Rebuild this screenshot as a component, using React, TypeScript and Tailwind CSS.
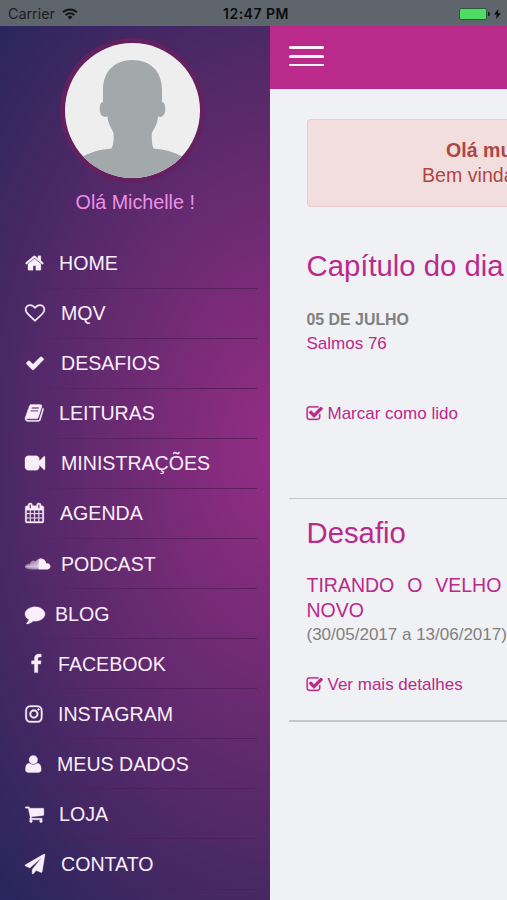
import React from "react";
import { FaSoundcloud } from "react-icons/fa";

const PATHS = {
  home: "M1472 992v480q0 26-19 45t-45 19h-384v-384h-256v384h-384q-26 0-45-19t-19-45v-480q0-1 .5-3t.5-3l575-474 575 474q1 2 1 6zm223-69l-62 74q-8 9-21 11h-3q-13 0-21-7l-692-577-692 577q-12 8-24 7-13-2-21-11l-62-74q-8-10-7-23.5t11-21.5l719-599q32-26 76-26t76 26l244 204v-195q0-14 9-23t23-9h192q14 0 23 9t9 23v408l219 182q10 8 11 21.5t-7 23.5z",
  heart: "M1664 596q0-81-21.5-143t-55-98.5-81.5-59.5-94-31-98-8-112 25.5-110.5 64-86.5 72-60 61.5q-18 22-49 22t-49-22q-24-28-60-61.5t-86.5-72-110.5-64-112-25.5-98 8-94 31-81.5 59.5-55 98.5-21.5 143q0 168 187 355l581 560 580-559q188-188 188-356zm128 0q0 221-229 450l-623 600q-18 18-44 18t-44-18l-624-602q-10-8-27.5-26t-55.5-65.5-68-97.5-53.5-121-23.5-138q0-220 127-344t351-124q62 0 126.5 21.5t120 58 95.5 68.5 76 68q36-36 76-68t95.5-68.5 120-58 126.5-21.5q224 0 351 124t127 344z",
  check: "M1671 566q0 40-28 68l-724 724-136 136q-28 28-68 28t-68-28l-136-136-362-362q-28-28-28-68t28-68l136-136q28-28 68-28t68 28l294 295 656-657q28-28 68-28t68 28l136 136q28 28 28 68z",
  book: "M1703 478q40 57 18 129l-275 906q-19 64-76.5 107.5t-122.5 43.5h-923q-77 0-148.5-53.5t-99.5-131.5q-24-67-2-127 0-4 3-27t4-37q1-8-3-21.5t-3-19.5q2-11 8-21t16.5-23.5 16.5-23.5q23-38 45-91.5t30-91.5q3-10 .5-30t-.5-28q3-11 17-28t17-23q21-36 42-92t25-90q1-9-2.5-32t.5-28q4-13 22-30.5t22-22.5q19-26 42.5-84.5t27.5-96.5q1-8-3-25.5t-2-26.5q2-8 9-18t18-23 17-21q8-12 16.5-30.5t15-35 16-36 19.5-32 26.5-23.5 36-11.5 47.5 5.5l-1 3q38-9 51-9h761q74 0 114 56t18 130l-274 906q-36 119-71.5 153.5t-128.5 34.5h-869q-27 0-38 15-11 16-1 43 24 70 144 70h923q29 0 56-15.5t35-41.5l300-987q7-22 5-57 38 15 59 43zm-1064 2q-4 13 2 22.5t20 9.5h608q13 0 25.5-9.5t16.5-22.5l21-64q4-13-2-22.5t-20-9.5h-608q-13 0-25.5 9.5t-16.5 22.5zm-83 256q-4 13 2 22.5t20 9.5h608q13 0 25.5-9.5t16.5-22.5l21-64q4-13-2-22.5t-20-9.5h-608q-13 0-25.5 9.5t-16.5 22.5z",
  video: "M1792 352v1088q0 42-39 59-13 5-25 5-27 0-45-19l-403-403v166q0 119-84.5 203.5t-203.5 84.5h-704q-119 0-203.5-84.5t-84.5-203.5v-704q0-119 84.5-203.5t203.5-84.5h704q119 0 203.5 84.5t84.5 203.5v165l403-402q18-19 45-19 12 0 25 5 39 17 39 59z",
  calendar: "M192 1664h288v-288h-288v288zm352 0h320v-288h-320v288zm-352-352h288v-320h-288v320zm352 0h320v-320h-320v320zm-352-384h288v-288h-288v288zm736 736h320v-288h-320v288zm-384-736h320v-288h-320v288zm768 736h288v-288h-288v288zm-384-352h320v-320h-320v320zm-352-864v-288q0-13-9.5-22.5t-22.5-9.5h-64q-13 0-22.5 9.5t-9.5 22.5v288q0 13 9.5 22.5t22.5 9.5h64q13 0 22.5-9.5t9.5-22.5zm736 864h288v-320h-288v320zm-384-384h320v-288h-320v288zm384 0h288v-288h-288v288zm32-480v-288q0-13-9.5-22.5t-22.5-9.5h-64q-13 0-22.5 9.5t-9.5 22.5v288q0 13 9.5 22.5t22.5 9.5h64q13 0 22.5-9.5t9.5-22.5zm384-64v1280q0 52-38 90t-90 38h-1408q-52 0-90-38t-38-90v-1280q0-52 38-90t90-38h128v-96q0-66 47-113t113-47h64q66 0 113 47t47 113v96h384v-96q0-66 47-113t113-47h64q66 0 113 47t47 113v96h128q52 0 90 38t38 90z",
  comment: "M1792 896q0 174-120 321.5t-326 233-450 85.5q-70 0-145-8-198 175-460 242-49 14-114 22-17 2-30.5-9t-17.5-29v-1q-3-4-.5-12t2-10 4.5-9.5l6-9 7-8.5 8-9q7-8 31-34.5t34.5-38 31-39.5 32.5-51 27-59 26-76q-157-89-247.5-220t-90.5-281q0-130 71-248.5t191-204.5 286-136.5 348-50.5q244 0 450 85.5t326 233 120 321.5z",
  facebook: "M1343 12v264h-157q-86 0-116 36t-30 108v189h293l-39 296h-254v759h-306v-759h-255v-296h255v-218q0-186 104-288.5t277-102.5q147 0 228 12z",
  instagram: "M1152 896q0-106-75-181t-181-75-181 75-75 181 75 181 181 75 181-75 75-181zm138 0q0 164-115 279t-279 115-279-115-115-279 115-279 279-115 279 115 115 279zm108-410q0 38-27 65t-65 27-65-27-27-65 27-65 65-27 65 27 27 65zm-502-220q-7 0-76.5-.5t-105.5 0-96.5 3-103 10-71.5 18.5q-50 20-88 58t-58 88q-11 29-18.5 71.5t-10 103-3 96.5 0 105.5.5 76.5-.5 76.5 0 105.5 3 96.5 10 103 18.5 71.5q20 50 58 88t88 58q29 11 71.5 18.5t103 10 96.5 3 105.5 0 76.5-.5 76.5.5 105.5 0 96.5-3 103-10 71.5-18.5q50-20 88-58t58-88q11-29 18.5-71.5t10-103 3-96.5 0-105.5-.5-76.5.5-76.5 0-105.5-3-96.5-10-103-18.5-71.5q-20-50-58-88t-88-58q-29-11-71.5-18.5t-103-10-96.5-3-105.5 0-76.5.5zm768 630q0 229-5 317-10 208-124 322t-322 124q-88 5-317 5t-317-5q-208-10-322-124t-124-322q-5-88-5-317t5-317q10-208 124-322t322-124q88-5 317-5t317 5q208 10 322 124t124 322q5 88 5 317z",
  user: "M1600 1405q0 120-73 189.500t-194 69.500h-874q-121 0-194-69.500t-73-189.500q0-53 3.500-103.500t14-109 26.500-108.500 43-97.500 62-81 85.500-53.500 111.500-20q9 0 42 21.500t74.500 48 108 48 133.500 21.500 133.500-21.500 108-48 74.500-48 42-21.500q61 0 111.500 20t85.500 53.500 62 81 43 97.500 26.500 108.500 14 109 3.500 103.500zm-320-893q0 159-112.500 271.500t-271.500 112.500-271.500-112.500-112.500-271.500 112.500-271.500 271.500-112.500 271.500 112.500 112.500 271.500z",
  cart: "M704 1536q0 52-38 90t-90 38-90-38-38-90 38-90 90-38 90 38 38 90zm896 0q0 52-38 90t-90 38-90-38-38-90 38-90 90-38 90 38 38 90zm128-1088v512q0 24-16.5 42.5t-40.5 21.5l-1044 122q13 60 13 70 0 16-24 64h920q26 0 45 19t19 45-19 45-45 19h-1024q-26 0-45-19t-19-45q0-11 8-31.5t16-36 21.5-40 15.5-29.5l-177-823h-204q-26 0-45-19t-19-45 19-45 45-19h256q16 0 28.5 6.5t19.5 15.5 13 24.5 8 26 5.5 29.5 4.5 26h1201q26 0 45 19t19 45z",
  plane: "M1764 11q33 24 27 64l-256 1536q-5 29-32 45-14 8-31 8-11 0-24-5l-453-185-242 295q-18 23-49 23-13 0-22-4-19-7-30.5-23.5t-11.5-36.5v-349l864-1059-1069 925-395-162q-37-14-40-55-2-40 32-59l1664-960q15-9 32-9 20 0 36 11z",
  checkSquare: "M1472 930v318q0 119-84.5 203.5t-203.5 84.5h-832q-119 0-203.5-84.5t-84.5-203.5v-832q0-119 84.5-203.5t203.5-84.5h832q63 0 117 25 15 7 18 23 3 17-9 29l-49 49q-10 10-23 10-3 0-9-2-23-6-45-6h-832q-66 0-113 47t-47 113v832q0 66 47 113t113 47h832q66 0 113-47t47-113v-254q0-13 9-22l64-64q10-10 23-10 6 0 12 3 20 8 20 29zm231-489l-814 814q-24 24-57 24t-57-24l-430-430q-24-24-24-57t24-57l110-110q24-24 57-24t57 24l263 263 647-647q24-24 57-24t57 24l110 110q24 24 24 57t-24 57z",
};

type IconName = keyof typeof PATHS;

function Glyph({ name, shift = 0, className }: { name: IconName; shift?: number; className: string }) {
  return (
    <svg
      className={className}
      viewBox={`${shift} 0 1792 1792`}
      fill="currentColor"
      stroke="currentColor"
      strokeWidth="30"
      overflow="visible"
    >
      <path d={PATHS[name]} />
    </svg>
  );
}

const MENU: { label: string; icon?: IconName; shift?: number; slot: string }[] = [
  { label: "HOME", icon: "home", shift: 50, slot: "w-[34px]" },
  { label: "MQV", icon: "heart", slot: "w-[36px]" },
  { label: "DESAFIOS", icon: "check", slot: "w-[36px]" },
  { label: "LEITURAS", icon: "book", shift: 60, slot: "w-[34px]" },
  { label: "MINISTRAÇÕES", icon: "video", slot: "w-[36px]" },
  { label: "AGENDA", icon: "calendar", shift: 40, slot: "w-[35px]" },
  { label: "PODCAST", slot: "w-[36px]" },
  { label: "BLOG", icon: "comment", slot: "w-[30px]" },
  { label: "FACEBOOK", icon: "facebook", shift: -110, slot: "w-[33px]" },
  { label: "INSTAGRAM", icon: "instagram", shift: 100, slot: "w-[33px]" },
  { label: "MEUS DADOS", icon: "user", shift: 150, slot: "w-[32px]" },
  { label: "LOJA", icon: "cart", shift: 40, slot: "w-[34px]" },
  { label: "CONTATO", icon: "plane", slot: "w-[36px]" },
];

function StatusBar() {
  return (
    <div className="flex h-[25.5px] shrink-0 items-center bg-[#5f656c] px-2 pt-[2px] font-[Inter,sans-serif] text-[14px] text-[#1c1e22]">
      <span className="w-[48px] text-[14.300px]">Carrier</span>
      <svg className="ml-[6px] h-[12px] w-[16px]" viewBox="0 0 16 12" fill="none" stroke="#15171a" strokeWidth="2">
        <path d="M1 4.400a10 10 0 0 1 14 0" />
        <path d="M3.600 7.100a6.200 6.200 0 0 1 8.800 0" />
        <path d="M8 11.400 5.600 9a3.400 3.400 0 0 1 4.800 0z" fill="#15171a" stroke="none" />
      </svg>
      <span className="ml-[145px] whitespace-nowrap text-[14px] font-semibold tracking-[0.500px] text-[#0b0c0e]">12:47 PM</span>
      <div className="-mr-[1.500px] ml-auto flex items-center">
        <div className="h-[12px] w-[28px] rounded-[2px] border border-[#2f5a3c] bg-[#4fdc64]" />
        <div className="ml-[0.500px] h-[4px] w-[2px] rounded-r-full bg-[#15171a]" />
        <svg className="ml-[4px] h-[10px] w-[7px]" viewBox="0 0 7 10" fill="#0b0c0e">
          <path d="M4.600 0 0 5.600h2.800L2 10l5-5.800H4z" />
        </svg>
      </div>
    </div>
  );
}

function Avatar() {
  return (
    <div className="flex h-[145px] w-[145px] items-center justify-center rounded-full bg-[#64215f]">
      <svg className="h-[135px] w-[135px] rounded-full" viewBox="0 0 135 135">
        <rect width="135" height="135" fill="#eeeeee" />
        <path
          fill="#a3a8ab"
          d="M67.500 17C49 17 38 29 38 47V59C35.500 59 34.700 62 34.700 66C35.200 72 37.500 75 42.500 73.500C43 81 46.500 85 48.500 90C49 97 48.500 102 46.500 105.500C35 106.500 27 108.500 17 114V135H118V114C108 108.500 100 106.500 88.500 105.500C87 102 86.500 97 86.800 90C89.500 85 92.500 81 93 73.500C97.500 75 100 72 100.300 66C100.300 62 99.500 59 97 59V47C97 29 86 17 67.500 17Z"
        />
      </svg>
    </div>
  );
}

function Sidebar() {
  return (
    <aside className="flex w-[269.5px] shrink-0 flex-col overflow-hidden bg-[radial-gradient(ellipse_390px_590px_at_285px_425px,#952d86_0%,#812b7c_22%,#682a71_45%,#4b2866_72%,#28265c_104%)]">
      <div className="flex flex-col items-center pr-[4px] pt-[12px]">
        <Avatar />
        <div className="ml-[5px] mt-[6px] text-[19.7px] leading-[26px] text-[#ec90e6]">Olá Michelle !</div>
      </div>
      <nav className="mt-[24px] flex flex-col pl-[18px] pr-[12.5px]">
        {MENU.map((m) => (
          <div key={m.label} className="flex h-[50.08px] shrink-0 flex-col">
            <div className="flex flex-1 items-center pl-[7px] text-[#fbeefb]">
              <span className={`shrink-0 ${m.slot}`}>
                {m.icon ? (
                  <Glyph name={m.icon} shift={m.shift} className="h-[20px] w-[20px]" />
                ) : (
                  <FaSoundcloud className="h-[20px] w-[26px]" />
                )}
              </span>
              <span className="whitespace-nowrap text-[19.6px] leading-[24px]">{m.label}</span>
            </div>
            <div className="h-px bg-linear-to-r from-[#501c58]/0 via-[#501c58]/70 to-[#501c58]/80" />
          </div>
        ))}
      </nav>
    </aside>
  );
}

function ActionLink({ children }: { children: React.ReactNode }) {
  return (
    <div className="flex items-center leading-[24px] text-[#b92a8a]">
      <Glyph name="checkSquare" shift={110} className="mr-[3.500px] h-[17.500px] w-[17.500px]" />
      <span className="whitespace-nowrap text-[17px]">{children}</span>
    </div>
  );
}

export default function App() {
  return (
    <div className="flex h-[900px] w-[507px] flex-col overflow-hidden bg-[#f0f1f5] font-['Liberation_Sans',Arial,sans-serif]">
      <StatusBar />
      <div className="flex min-h-0 flex-1">
        <Sidebar />
        <main className="flex min-w-0 flex-1 flex-col overflow-hidden">
          <header className="flex h-[63px] shrink-0 items-center bg-[#b92a8a] pb-[1.500px] pl-[19.5px]">
            <div className="flex w-[35px] flex-col gap-[6px]">
              <div className="h-[2.600px] rounded-full bg-[#fff2fb]" />
              <div className="h-[2.600px] rounded-full bg-[#fff2fb]" />
              <div className="h-[2.600px] rounded-full bg-[#fff2fb]" />
            </div>
          </header>
          <div className="ml-[37px] mt-[30.500px] h-[88px] shrink-0 rounded-l-[4px] border border-r-0 border-[#ebccd1] bg-[#f2dede] pt-[18px] text-[19.6px] leading-[24.5px] text-[#ad4644]">
            <div className="whitespace-nowrap pl-[138.500px] font-bold">Olá mu</div>
            <div className="whitespace-nowrap pl-[114.500px]">Bem vinda</div>
          </div>
          <section className="shrink-0 pl-[37px]">
            <h2 className="mt-[40.500px] whitespace-nowrap text-[29.300px] leading-[36px] text-[#b92a8a]">Capítulo do dia</h2>
            <div className="mt-[24px] text-[15.900px] font-bold leading-[24px] text-[#808080]">05 DE JULHO</div>
            <div className="text-[17px] leading-[24px] text-[#b92a8a]">Salmos 76</div>
            <div className="mt-[46.500px]">
              <ActionLink>Marcar como lido</ActionLink>
            </div>
          </section>
          <hr className="ml-[19px] mt-[71.500px] h-[1.500px] shrink-0 border-0 bg-[#c6c6cb]" />
          <section className="shrink-0 pl-[37px]">
            <h2 className="mt-[16px] text-[29.300px] leading-[36px] text-[#b92a8a]">Desafio</h2>
            <div className="mt-[22px] whitespace-nowrap text-[19.500px] leading-[24.5px] text-[#b92a8a]">
              <div className="[word-spacing:7.500px]">TIRANDO O VELHO</div>
              <div>NOVO</div>
            </div>
            <div className="whitespace-nowrap text-[17px] leading-[26px] text-[#808080]">(30/05/2017 a 13/06/2017)</div>
            <div className="mt-[24.500px]">
              <ActionLink>Ver mais detalhes</ActionLink>
            </div>
          </section>
          <hr className="ml-[19px] mt-[23.500px] h-[1.500px] shrink-0 border-0 bg-[#c6c6cb]" />
        </main>
      </div>
    </div>
  );
}
